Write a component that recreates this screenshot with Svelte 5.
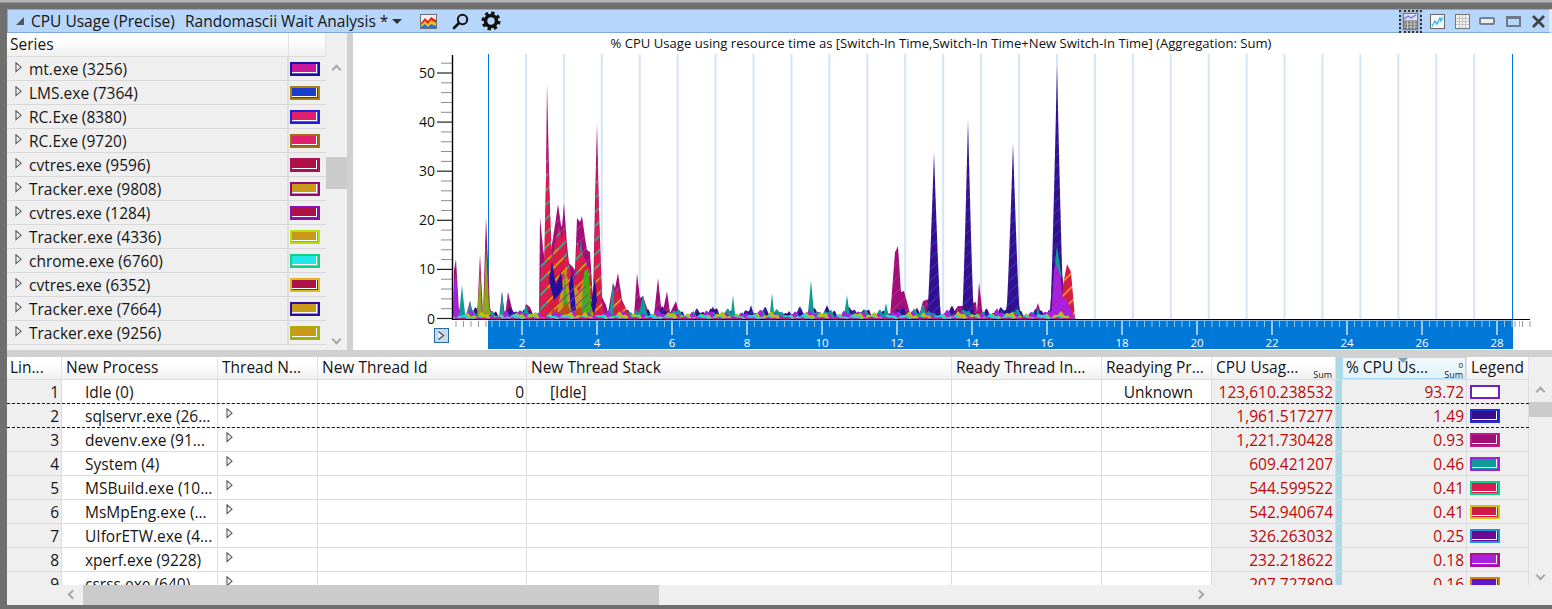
<script>
  const series = [
    ['mt.exe (3256)', '#1a10a8', '#c8189c'],
    ['LMS.exe (7364)', '#a88010', '#1a3ccc'],
    ['RC.Exe (8380)', '#2020d8', '#e0206c'],
    ['RC.Exe (9720)', '#a07010', '#e0206c'],
    ['cvtres.exe (9596)', '#a81058', '#b01048'],
    ['Tracker.exe (9808)', '#900a70', '#c89a18'],
    ['cvtres.exe (1284)', '#8a10b0', '#b01048'],
    ['Tracker.exe (4336)', '#b8e010', '#c89a18'],
    ['chrome.exe (6760)', '#10d088', '#20e8e8'],
    ['cvtres.exe (6352)', '#e0b820', '#b01048'],
    ['Tracker.exe (7664)', '#300aa0', '#c89a18'],
    ['Tracker.exe (9256)', '#a0b010', '#c89a18'],
  ];

  const rows = [
    { n: 1, p: 'Idle (0)', tid: '0', stack: '[Idle]', rp: 'Unknown', cpu: '123,610.238532', pct: '93.72', b: '#7020c8', f: '#fff' },
    { n: 2, p: 'sqlservr.exe (26...', cpu: '1,961.517277', pct: '1.49', b: '#2030d8', f: '#34108c', sel: true },
    { n: 3, p: 'devenv.exe (91...', cpu: '1,221.730428', pct: '0.93', b: '#c01890', f: '#a00e78' },
    { n: 4, p: 'System (4)', cpu: '609.421207', pct: '0.46', b: '#a020e0', f: '#0e9c98' },
    { n: 5, p: 'MSBuild.exe (10...', cpu: '544.599522', pct: '0.41', b: '#10d088', f: '#dc1c50' },
    { n: 6, p: 'MsMpEng.exe (...', cpu: '542.940674', pct: '0.41', b: '#d8c010', f: '#d01c44' },
    { n: 7, p: 'UIforETW.exe (4...', cpu: '326.263032', pct: '0.25', b: '#2090e0', f: '#680c90' },
    { n: 8, p: 'xperf.exe (9228)', cpu: '232.218622', pct: '0.18', b: '#b01090', f: '#a820e0' },
    { n: 9, p: 'csrss.exe (640)', cpu: '207.727809', pct: '0.16', b: '#d88010', f: '#5c18c8' },
  ];

  // chart scale, in page pixels because the svg viewBox matches the page
  const Y0 = 319;
  const yOf = (v) => 318.5 - 4.91 * v;
  const xOf = (t) => 447 + 37.5 * t;
  const range = (n, f) => Array.from({ length: n }, (_, i) => f(i));

  const gridLines = range(27, (i) => 488 + 37.93 * i).slice(1);
  const yMinor = range(27, (i) => i * 2).filter((v) => v % 10 !== 0);
  const yMajor = [0, 10, 20, 30, 40, 50];
  const xLabels = range(14, (i) => (i + 1) * 2);
  const rulerMinor = range(138, (i) => 1.2 + i * 0.2).filter((t) => Math.abs(t / 2 - Math.round(t / 2)) > 0.01);

  const pts = (a) => a.map((p) => p.join(',')).join(' ');

  // sharp triangular peaks on a small noisy floor
  function wave(x, amp, seed) {
    const n = Math.sin(x * 0.37 + seed) + Math.sin(x * 0.91 + seed * 2) * 0.6 + Math.sin(x * 0.13 + seed * 3) * 0.7;
    return Math.max(0, amp * (0.5 + n * 0.3));
  }
  function spiky(peaks, floor, seed, from = 453, to = 1076) {
    const out = [[from, Y0]];
    for (let x = from; x <= to; x += 1) {
      let h = wave(x, floor, seed);
      for (const [px, ph, w] of peaks) {
        const d = 1 - Math.abs(x - px) / w;
        if (d > 0) h = Math.max(h, ph * Math.pow(d, 1.25));
      }
      const fade = x > 1068 ? (1076 - x) / 8 : 1;
      out.push([x, Y0 - h * fade]);
    }
    out.push([to, Y0]);
    return pts(out);
  }

  const envelope = pts([[453,319],[454,270],[456,259],[459,312],[462,300],[465,316],[467,312],[470,301],[474,318],[477,318],[480,254],[483,315],[486,217],[490,308],[494,318],[499,318],[502,292],[505,316],[508,292],[514,317],[517,318],[520,312],[523,316],[526,304],[530,307],[534,317],[539,318],[540,217],[543,248],[545,262],[547,83],[549,170],[551,250],[555,225],[558,204],[561,225],[562,227],[564,203],[567,245],[569,263],[572,266],[575,270],[577,218],[580,222],[582,216],[585,238],[587,250],[590,252],[593,300],[595,200],[597,123],[599,210],[602,297],[606,305],[608,313],[613,283],[615,288],[618,273],[622,300],[630,317],[634,316],[637,273],[640,298],[643,296],[650,317],[654,315],[658,278],[662,316],[667,291],[670,313],[676,301],[680,317],[890,317],[895,252],[898,246],[901,292],[904,291],[910,313],[913,317],[917,307],[919,316],[923,301],[932,298],[940,315],[950,317],[958,306],[964,306],[976,302],[977,312],[979,282],[983,317],[993,317],[997,308],[1001,317],[1033,317],[1038,303],[1042,317],[1050,317],[1054,250],[1057,245],[1063,280],[1066,317],[1076,319]]);

  const indigo = spiky([[934,167,7],[968,200,6],[1013,176,7],[1057,254,7],[932,20,9],[970,14,9],[713,13,5],[751,14,5],[827,14,7],[864,10,6],[789,8,7],[917,9,3],[1008,7,3]], 11, 1.2);
  const teal = spiky([[462,34,4],[470,18,4],[502,28,3],[520,9,3],[526,14,5],[581,80,9],[613,36,5],[618,22,5],[643,24,6],[636,10,4],[733,24,3],[772,26,3],[811,39,4],[847,24,4],[886,16,4],[923,15,6],[958,10,3],[997,10,3],[1038,12,3],[1057,74,6]], 9, 2.6);

  const redGreen = pts([[540,319],[541,265],[544,262],[547,140],[549,190],[552,258],[556,240],[559,225],[562,240],[564,225],[567,255],[570,270],[575,280],[577,240],[580,250],[583,255],[586,262],[590,270],[593,308],[595,235],[597,150],[599,225],[602,305],[606,319]]);
  const redYellow = pts([[547,319],[548,240],[552,262],[556,245],[560,252],[565,262],[570,275],[575,287],[580,268],[585,262],[589,275],[594,300],[597,255],[601,300],[606,319]]);
  const redLate = pts([[613,319],[614,295],[618,288],[622,303],[632,319]]);
  const redEnd = pts([[1060,319],[1063,285],[1067,264],[1071,272],[1075,318],[1076,319]]);
  const violetEnd = pts([[1051,319],[1054,270],[1057,258],[1060,272],[1063,300],[1066,298],[1071,310],[1075,319]]);
  const tealEnd = pts([[1055,262],[1057,247],[1061,272],[1062,280],[1059,272]]);
  const olive = pts([[477,319],[480,268],[482,316],[484,300],[486,245],[489,306],[492,319]]);
  const violetStart = pts([[453,319],[454,285],[456,272],[459,319]]);
  const navyBits = [
    pts([[549,280],[552,262],[556,285],[561,272],[563,290],[554,300]]),
    pts([[569,285],[572,270],[576,310],[571,312]]),
    pts([[591,305],[595,278],[597,300],[594,315]]),
  ];
  const amber = pts([[556,319],[561,290],[566,265],[569,290],[575,285],[579,292],[584,280],[590,300],[594,319]]);
  const green = pts([[562,319],[565,272],[567,300],[573,319]]);
  const green2 = pts([[581,319],[584,272],[588,268],[590,290],[592,319]]);
  const brown = pts([[548,319],[553,309],[560,313],[566,302],[572,314],[580,306],[586,319]]);

  const bands = [
    ['#a820e0', 8, 3.3],
    ['#b8c010', 6.5, 4.9],
    ['#20d8d8', 4.5, 5.7],
    ['#c818a0', 2.2, 6.4],
  ];
</script>

{#snippet tri()}
  <svg class="tri" width="7" height="11" viewBox="0 0 7 11"><path d="M1 .8V9.6L6 5.2Z" fill="#fff" stroke="#555" stroke-width="1.1" /></svg>
{/snippet}

{#snippet swatch(b, f, plain)}
  <span class="swatch" style="--b:{b};--f:{f}"><i class:plain></i></span>
{/snippet}

<div class="window">
  <header class="titlebar">
    <span class="corner"></span>
    <span class="t1">CPU Usage (Precise)</span>
    <span class="t2">Randomascii Wait Analysis *</span>
    <span class="drop"></span>
    <svg class="ic-chart" width="17" height="15" viewBox="0 0 17 15">
      <rect x=".5" y=".5" width="16" height="14" fill="#f4eeee" stroke="#6f6f78" />
      <path d="M1 9 5 4l3 3 3-4 5 3v8H1Z" fill="#e02818" />
      <path d="M1 11 5 7l3 3 3-4 5 3v5H1Z" fill="#f4c020" />
      <path d="M1 13 5 10l3 3 3-3 5 2v2H1Z" fill="#1878e0" />
    </svg>
    <svg class="ic-search" width="17" height="17" viewBox="0 0 17 17">
      <circle cx="10.5" cy="6.5" r="4.7" fill="none" stroke="#111" stroke-width="2" />
      <path d="M7 10 2 15" stroke="#111" stroke-width="2.6" stroke-linecap="round" />
    </svg>
    <svg class="ic-gear" width="20" height="20" viewBox="0 0 20 20">
      <circle cx="10" cy="10" r="8" fill="none" stroke="#111" stroke-width="3" stroke-dasharray="3.3 2.98" />
      <circle cx="10" cy="10" r="5.5" fill="none" stroke="#111" stroke-width="3.6" />
    </svg>
    <span class="grow"></span>
    <span class="selected">
      <svg width="15" height="17" viewBox="0 0 15 17">
        <rect width="15" height="17" fill="#777" />
        <rect x="1" y="1" width="13" height="6" fill="#dfe3f6" />
        <path d="M1 6 5 3l3 2 5-3" fill="none" stroke="#6f6fd0" stroke-width="1.2" />
        <path d="M1 8h13M1 11h13M1 14h13M4.5 8v8M8 8v8M11.5 8v8" stroke="#c4c4c4" />
      </svg>
    </span>
    <svg class="ic-line" width="15" height="15" viewBox="0 0 15 15">
      <rect x=".5" y=".5" width="14" height="14" fill="#f6f8fa" stroke="#666" />
      <path d="M2 12.5 5 7l2 3 3-6 1 3 2-4" fill="none" stroke="#38b8ee" stroke-width="1.4" />
    </svg>
    <svg class="ic-grid" width="15" height="15" viewBox="0 0 15 15">
      <rect x=".5" y=".5" width="14" height="14" fill="#f2f2f2" stroke="#777" />
      <path d="M1 4.5h13M1 7.5h13M1 10.5h13M4.5 1v13M7.5 1v13M10.5 1v13" stroke="#c4c4c4" />
    </svg>
    <span class="btn-min"></span>
    <span class="btn-max"></span>
    <svg class="ic-close" width="13" height="13" viewBox="0 0 13 13"><path d="M1 1 12 12M12 1 1 12" stroke="#444" stroke-width="2.8" /></svg>
  </header>

  <section class="upper">
    <div class="series">
      <div class="series-list">
        <div class="series-head"><span>Series</span><span></span></div>
        {#each series as [name, b, f]}
          <div class="series-row">
            <span class="s-name">{@render tri()}{name}</span>
            <span class="s-leg">{@render swatch(b, f)}</span>
          </div>
        {/each}
      </div>
      <div class="vbar">
        <span class="chev up"></span>
        <span class="thumb"></span>
        <span class="chev down"></span>
      </div>
    </div>
    <div class="vsplit"></div>

    <svg class="chart" width="1199" height="317" viewBox="353 33 1199 317">
      <defs>
        <pattern id="h-green" width="10" height="10" patternUnits="userSpaceOnUse" patternTransform="rotate(45)">
          <rect width="10" height="10" fill="#dc1c50" /><rect width="1.4" height="10" fill="#18cc88" />
        </pattern>
        <pattern id="h-yellow" width="10" height="10" patternUnits="userSpaceOnUse" patternTransform="rotate(45)">
          <rect width="10" height="10" fill="#d81c48" /><rect width="1.4" height="10" fill="#d8c010" />
        </pattern>
        <pattern id="h-blue" width="8" height="8" patternUnits="userSpaceOnUse" patternTransform="rotate(45)">
          <rect width="8" height="8" fill="#34108c" /><rect width="1" height="8" fill="#2838c8" />
        </pattern>
        <pattern id="h-magenta" width="10" height="10" patternUnits="userSpaceOnUse" patternTransform="rotate(45)">
          <rect width="10" height="10" fill="#a00e78" /><rect width="1" height="10" fill="#b82a90" />
        </pattern>
        <pattern id="h-violet" width="10" height="10" patternUnits="userSpaceOnUse" patternTransform="rotate(45)">
          <rect width="10" height="10" fill="#a820e0" /><rect width="1" height="10" fill="#c01890" />
        </pattern>
        <pattern id="h-thin" width="7" height="7" patternUnits="userSpaceOnUse" patternTransform="rotate(45)">
          <rect width="1" height="7" fill="#a820e0" />
        </pattern>
      </defs>

      <text class="c-title" x="941" y="48" text-anchor="middle">% CPU Usage using resource time as [Switch-In Time,Switch-In Time+New Switch-In Time] (Aggregation: Sum)</text>

      {#each gridLines as x}
        <line x1={x} x2={x} y1="54" y2="319" stroke="#d4e6f6" stroke-width="2" />
      {/each}
      <line x1="488.5" x2="488.5" y1="54" y2="320" stroke="#0078d7" />
      <line x1="1512.5" x2="1512.5" y1="54" y2="320" stroke="#0078d7" />

      <!-- stacked areas, back to front -->
      <polygon points={envelope} fill="url(#h-magenta)" />
      <polygon points={indigo} fill="url(#h-blue)" />
      <polygon points={teal} fill="#0e9c98" />
      <polygon points={redGreen} fill="url(#h-green)" />
      <polygon points={redYellow} fill="url(#h-yellow)" />
      <polygon points={redLate} fill="url(#h-yellow)" />
      <polygon points={redEnd} fill="url(#h-yellow)" />
      <polygon points={violetEnd} fill="url(#h-violet)" />
      <polygon points={tealEnd} fill="#0e9c98" />
      <polygon points={olive} fill="#8aa818" />
      <polygon points={violetStart} fill="#a820e0" />
      <polygon points={amber} fill="#c89a18" />
      <polygon points={green} fill="#40b010" />
      <polygon points={green2} fill="#40b010" />
      {#each navyBits as bit}
        <polygon points={bit} fill="#20109a" />
      {/each}
      <polygon points={amber} fill="url(#h-thin)" />
      <polygon points={brown} fill="#c04a10" />
      {#each bands as [color, amp, seed]}
        <polygon points={spiky([], amp, seed)} fill={color} />
      {/each}

      <!-- y axis -->
      {#each yMinor as v}
        <line x1="441" x2="453" y1={yOf(v)} y2={yOf(v)} stroke="#8c8c8c" />
      {/each}
      {#each yMajor as v}
        <line x1="437" x2="453" y1={yOf(v)} y2={yOf(v)} stroke="#222" stroke-width="1.2" />
        <text class="c-num" x="435" y={yOf(v) + 5} text-anchor="end">{v}</text>
      {/each}
      <line x1="452.5" x2="452.5" y1="55" y2="320" stroke="#000" stroke-width="1.4" />
      <line x1="452" x2="1530" y1="319.5" y2="319.5" stroke="#000" stroke-width="1.2" />

      <!-- ruler -->
      {#each range(5, (i) => 456 + i * 7.5) as x}
        <line x1={x} x2={x} y1="321" y2="327" stroke="#999" />
      {/each}
      {#each range(3, (i) => 1515 + i * 7.5) as x}
        <line x1={x} x2={x} y1="321" y2="327" stroke="#999" />
      {/each}
      <rect x="488" y="320.5" width="1025" height="28.5" fill="#0078d7" />
      {#each rulerMinor as t}
        <line x1={xOf(t)} x2={xOf(t)} y1="321" y2="327" stroke="#8fc4ee" />
      {/each}
      {#each xLabels as t}
        <line x1={xOf(t)} x2={xOf(t)} y1="321" y2="335" stroke="#fff" stroke-width="1.2" />
        <text class="c-tick" x={xOf(t)} y="347" text-anchor="middle">{t}</text>
      {/each}

      <rect x="434.5" y="328.5" width="14" height="14" fill="#c4dcf0" stroke="#2a6a9a" />
      <path d="M438.5 331.5 443.5 335.5 438.5 339.5" fill="#e8f0f8" stroke="#555" stroke-width="1.4" />
    </svg>
  </section>

  <div class="hsplit"></div>

  <section class="grid-wrap">
    <div class="table">
      <div class="row head">
        <span class="c">Lin...</span>
        <span class="c">New Process</span>
        <span class="c">Thread N...</span>
        <span class="c">New Thread Id</span>
        <span class="c">New Thread Stack</span>
        <span class="c">Ready Thread In...</span>
        <span class="c">Readying Pr...</span>
        <span class="c agg">CPU Usag...<small>Sum</small></span>
        <span class="blue-sep"></span>
        <span class="c agg sorted"><em></em>% CPU Us...<small><b>0</b>Sum</small></span>
        <span class="c">Legend</span>
      </div>
      {#each rows as r}
        <div class="row body" class:sel={r.sel}>
          <span class="c num gray">{r.n}</span>
          <span class="c proc">{r.p}</span>
          <span class="c thr">{#if r.n > 1}{@render tri()}{/if}</span>
          <span class="c num">{r.tid ?? ''}</span>
          <span class="c stack">{r.stack ?? ''}</span>
          <span class="c"></span>
          <span class="c num dark">{r.rp ?? ''}</span>
          <span class="c num val gray">{r.cpu}</span>
          <span class="blue-sep"></span>
          <span class="c num val gray">{r.pct}</span>
          <span class="c leg gray">{@render swatch(r.b, r.f, r.n === 1)}</span>
        </div>
      {/each}
    </div>
    <div class="vbar2">
      <span class="chev up"></span>
      <span class="thumb2"></span>
      <span class="chev down"></span>
    </div>
  </section>

  <div class="hscroll">
    <span class="chev left"></span>
    <span class="hthumb"></span>
    <span class="chev right"></span>
  </div>
</div>

<style>
  :global(body) { margin: 0; background: #6f6f6f; }

  .window {
    width: 1552px; height: 609px; box-sizing: border-box;
    padding: 9px 0 4px 7px; overflow: hidden;
    background: linear-gradient(#b4b4b4 2px, #6f6f6f 3px);
    font: 15.5px "Open Sans", "Noto Sans", sans-serif; color: #151515;
    display: flex; flex-direction: column;
  }

  .titlebar {
    height: 24px; flex: none; display: flex; align-items: center;
    background: #b6d6fb; border: solid #7fa9dc; border-width: 1px 3px 1px 1px; border-right-color: #e2ecf8;
    box-sizing: border-box; white-space: nowrap;
  }
  .corner { width: 0; height: 0; margin-left: 8px; border: 4px solid transparent; border-right-color: #555; border-bottom-color: #555; }
  .t1 { margin-left: 7px; width: 154px; }
  .t2 { width: 207px; }
  .drop { width: 0; height: 0; border: 5px solid transparent; border-top-color: #333; border-bottom: 0; }
  .ic-chart { margin-left: 18px; }
  .ic-search { margin-left: 15px; }
  .ic-gear { margin-left: 12px; }
  .grow { flex: 1; }
  .selected { display: flex; padding: 1px 2px; border: 2px dotted #333; margin-right: 6px; background: #a7bfdc; }
  .ic-grid { margin-left: 10px; }
  .ic-line { margin-left: 2px; }
  .btn-min { width: 12px; height: 4px; border: 2px solid #77808c; border-radius: 2px; background: #e8eef6; margin-left: 9px; }
  .btn-max { width: 11px; height: 6px; border: 2px solid #70788a; border-top-width: 3px; margin-left: 11px; }
  .ic-close { margin-left: 11px; margin-right: 4px; }

  .upper { height: 317px; flex: none; display: flex; background: #fff; }
  .series { width: 340px; flex: none; display: flex; background: #efefef; }
  .series-list { width: 319px; }
  .series-head {
    height: 24px; display: grid; grid-template-columns: 282px 37px; align-items: center;
    background: linear-gradient(#fff 30%, #f0f0f0); box-sizing: border-box; border-bottom: 1px solid #dcdcdc;
  }
  .series-head span { padding-left: 3px; height: 100%; line-height: 22px; box-sizing: border-box; border-right: 1px solid #e2e2e2; }
  .series-row {
    height: 24px; display: grid; grid-template-columns: 282px 37px; box-sizing: border-box;
    border-bottom: 1px solid #d8d8d8;
  }
  .s-name { display: flex; align-items: center; padding: 1px 0 0 8px; border-right: 2px solid #dedede; }
  .s-name :global(.tri) { margin: -4px 7px 0 0; }
  .s-leg { display: flex; align-items: center; padding-left: 1px; }

  .swatch { display: block; width: 30px; height: 14px; box-sizing: border-box; border: 2px solid var(--b); background: var(--f); padding: 0 1px 1px 0; }
  .swatch i { display: block; height: 100%; box-sizing: border-box; border-right: 1px solid #fff; border-bottom: 1px solid #fff; }
  .swatch i.plain { border: 0; }

  .vbar { width: 21px; position: relative; }
  .thumb { position: absolute; left: 0; right: 0; top: 124px; height: 32px; background: #cbcbcb; }
  .chev { position: absolute; width: 7px; height: 7px; border: solid #a8a8a8; border-width: 2px 0 0 2px; box-sizing: border-box; }
  .vbar .up { left: 7px; top: 33px; transform: rotate(45deg); }
  .vbar .down { left: 7px; bottom: 7px; transform: rotate(225deg); }

  .vsplit { width: 6px; flex: none; background: #d0d0d0; }
  .chart { flex: none; display: block; }
  .c-title { font: 13.1px "Open Sans", "Noto Sans", sans-serif; fill: #111; }
  .c-num { font: 14px "Open Sans", "Noto Sans", sans-serif; fill: #111; }
  .c-tick { font: 11.5px "Open Sans", "Noto Sans", sans-serif; fill: #fff; }

  .hsplit { height: 7px; flex: none; background: #d0d0d0; }

  .grid-wrap { height: 228px; flex: none; display: flex; background: #efefef; }
  .table { width: 1522px; overflow: hidden; background: #fff; }
  .row {
    display: grid; height: 24px; box-sizing: border-box;
    grid-template-columns: 55px 156px 100px 209px 425px 150px 110px 124px 6px 125px 62px;
    white-space: nowrap;
  }
  .head { height: 23px; background: linear-gradient(#fff 30%, #f0f0f0); border-bottom: 1px solid #dcdcdc; }
  .head .c { padding-left: 4px; line-height: 21px; border-right: 1px solid #e2e2e2; box-sizing: border-box; position: relative; }
  .head .c:nth-child(1) { padding-left: 3px; }
  .head .c:nth-child(2) { padding-left: 4px; }
  .sorted { background: linear-gradient(#f2fafe, #e0f2fb); box-shadow: inset 0 0 0 1px #aadcf5; }
  .sorted em { position: absolute; left: 56px; top: 1px; width: 0; height: 0; border: 5px solid transparent; border-top-color: #7f9fb6; border-bottom: 0; }
  .agg small { position: absolute; right: 3px; bottom: -1px; font-size: 9px; line-height: 11px; text-align: right; }
  .agg small b { display: block; font-weight: 400; font-size: 8px; line-height: 8px; }

  .body { border-bottom: 1px solid #dcdcdc; }
  .body .c { line-height: 25px; box-sizing: border-box; border-right: 1px solid #dcdcdc; padding: 0 2px; overflow: hidden; }
  .num { text-align: right; }
  .gray { background: #efefef; }
  .proc { padding-left: 23px !important; }
  .stack { padding-left: 23px !important; }
  .thr { padding-left: 8px !important; }
  .thr :global(.tri) { margin-top: 4px; display: block; }
  .dark { padding-right: 18px !important; }
  .val { color: #b80a0a; padding-right: 2px !important; }
  .leg { display: flex; align-items: center; padding-left: 3px !important; }
  .blue-sep { background: #add8e6; }

  /* the selected row is drawn with dashed rules above and below */
  .body.sel { position: relative; border-bottom: 0; }
  .body.sel::after {
    content: ""; position: absolute; left: 0; right: 0; top: -1px; bottom: 0;
    border: dashed #111; border-width: 1px 0; pointer-events: none;
  }

  .vbar2 { flex: 1; position: relative; background: #efefef; }
  .thumb2 { position: absolute; left: 0; right: 0; top: 45px; height: 15px; background: #cbcbcb; }
  .vbar2 .up { left: 8px; top: 31px; transform: rotate(45deg); }
  .vbar2 .down { left: 8px; bottom: 6px; transform: rotate(225deg); }

  .hscroll { height: 20px; flex: none; position: relative; background: #efefef; }
  .hthumb { position: absolute; left: 76px; width: 576px; top: 0; bottom: 0; background: #cbcbcb; }
  .hscroll .left { left: 62px; top: 6px; transform: rotate(-45deg); }
  .hscroll .right { left: 1189px; top: 6px; transform: rotate(135deg); }
</style>
